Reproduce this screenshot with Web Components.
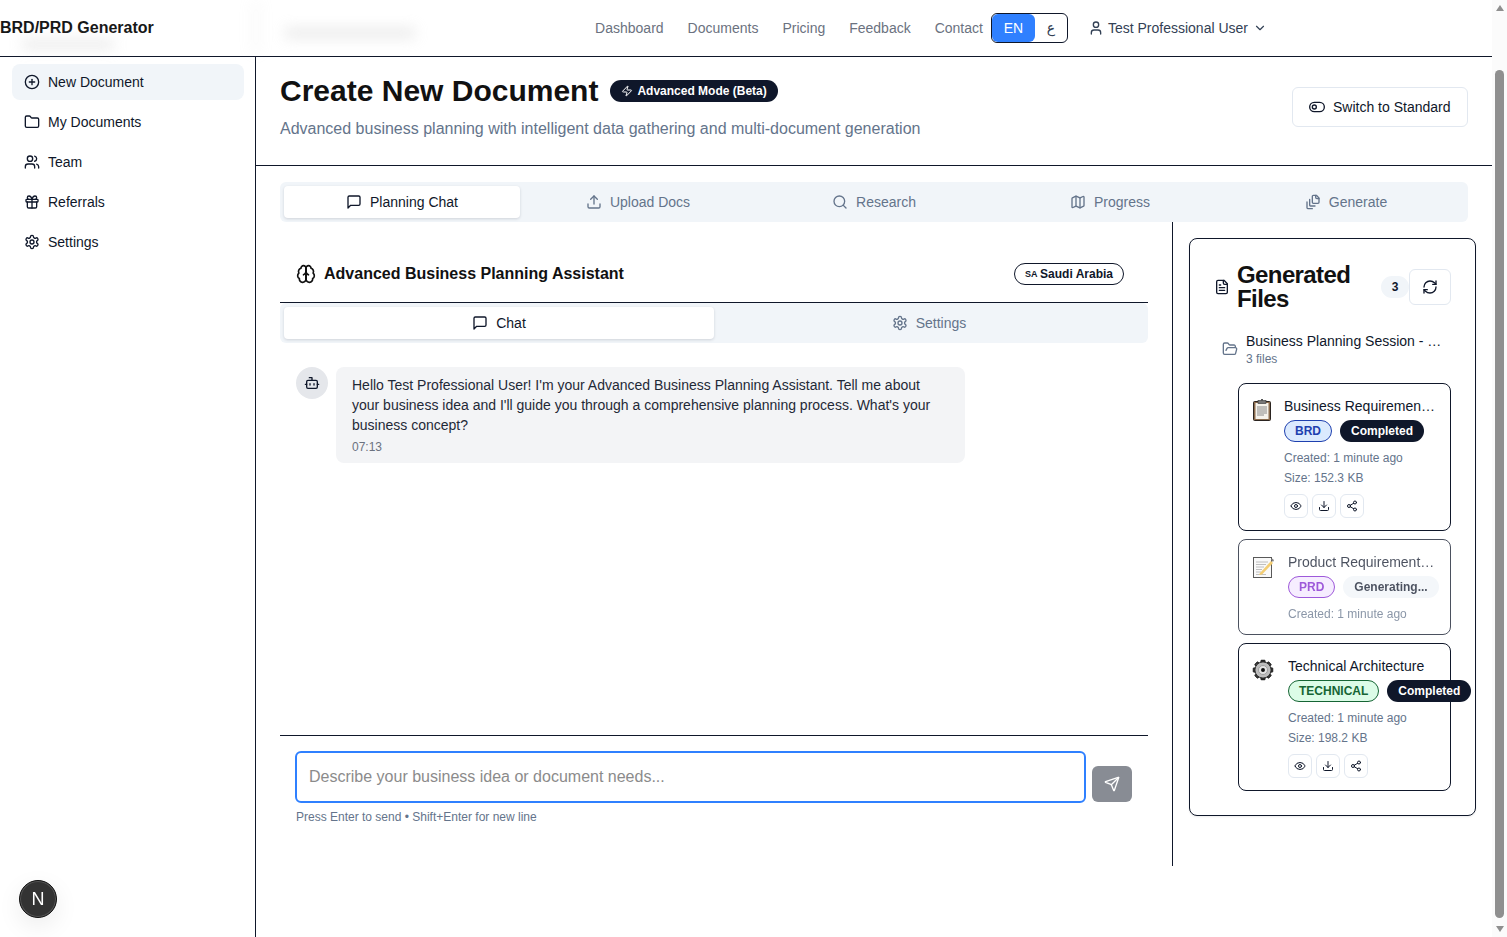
<!DOCTYPE html>
<html lang="en">
<head>
<meta charset="utf-8">
<title>BRD/PRD Generator</title>
<style>
  html, body { margin: 0; height: 937px; overflow: hidden; background: #fff; }
  body { font-family: "Liberation Sans", Arial, sans-serif; color: #0f172a; }
</style>
</head>
<body>
<app-shell>
  <top-bar slot="top"></top-bar>
  <side-nav slot="side"></side-nav>
  <page-head slot="main"></page-head>
  <tab-strip slot="main" class="outer" active="Planning Chat"
    tabs="message:Planning Chat,upload:Upload Docs,search:Research,map:Progress,filestack:Generate"></tab-strip>
  <work-area slot="main">
    <chat-panel slot="left"></chat-panel>
    <files-panel slot="right"></files-panel>
  </work-area>
  <page-scrollbar slot="bar"></page-scrollbar>
</app-shell>
<dev-badge></dev-badge>

<script>
const ICONS = {
  plus: '<circle cx="12" cy="12" r="10"/><path d="M8 12h8"/><path d="M12 8v8"/>',
  folder: '<path d="M20 20a2 2 0 0 0 2-2V8a2 2 0 0 0-2-2h-7.9a2 2 0 0 1-1.69-.9L9.6 3.9A2 2 0 0 0 7.93 3H4a2 2 0 0 0-2 2v13a2 2 0 0 0 2 2Z"/>',
  users: '<path d="M16 21v-2a4 4 0 0 0-4-4H6a4 4 0 0 0-4 4v2"/><circle cx="9" cy="7" r="4"/><path d="M22 21v-2a4 4 0 0 0-3-3.87"/><path d="M16 3.13a4 4 0 0 1 0 7.75"/>',
  gift: '<rect x="3" y="8" width="18" height="4" rx="1"/><path d="M12 8v13"/><path d="M19 12v7a2 2 0 0 1-2 2H7a2 2 0 0 1-2-2v-7"/><path d="M7.5 8a2.5 2.5 0 0 1 0-5A4.8 8 0 0 1 12 8a4.8 8 0 0 1 4.5-5 2.5 2.5 0 0 1 0 5"/>',
  settings: '<path d="M12.22 2h-.44a2 2 0 0 0-2 2v.18a2 2 0 0 1-1 1.73l-.43.25a2 2 0 0 1-2 0l-.15-.08a2 2 0 0 0-2.73.73l-.22.38a2 2 0 0 0 .73 2.73l.15.1a2 2 0 0 1 1 1.72v.51a2 2 0 0 1-1 1.74l-.15.09a2 2 0 0 0-.73 2.73l.22.38a2 2 0 0 0 2.73.73l.15-.08a2 2 0 0 1 2 0l.43.25a2 2 0 0 1 1 1.73V20a2 2 0 0 0 2 2h.44a2 2 0 0 0 2-2v-.18a2 2 0 0 1 1-1.73l.43-.25a2 2 0 0 1 2 0l.15.08a2 2 0 0 0 2.73-.73l.22-.39a2 2 0 0 0-.73-2.73l-.15-.08a2 2 0 0 1-1-1.74v-.5a2 2 0 0 1 1-1.74l.15-.09a2 2 0 0 0 .73-2.73l-.22-.38a2 2 0 0 0-2.73-.73l-.15.08a2 2 0 0 1-2 0l-.43-.25a2 2 0 0 1-1-1.73V4a2 2 0 0 0-2-2z"/><circle cx="12" cy="12" r="3"/>',
  message: '<path d="M21 15a2 2 0 0 1-2 2H7l-4 4V5a2 2 0 0 1 2-2h14a2 2 0 0 1 2 2z"/>',
  upload: '<path d="M21 15v4a2 2 0 0 1-2 2H5a2 2 0 0 1-2-2v-4"/><polyline points="17 8 12 3 7 8"/><line x1="12" y1="3" x2="12" y2="15"/>',
  search: '<circle cx="11" cy="11" r="8"/><path d="m21 21-4.3-4.3"/>',
  map: '<path d="M14.106 5.553a2 2 0 0 0 1.788 0l3.659-1.83A1 1 0 0 1 21 4.619v12.764a1 1 0 0 1-.553.894l-4.553 2.277a2 2 0 0 1-1.788 0l-4.212-2.106a2 2 0 0 0-1.788 0l-3.659 1.83A1 1 0 0 1 3 19.381V6.618a1 1 0 0 1 .553-.894l4.553-2.277a2 2 0 0 1 1.788 0z"/><path d="M15 5.764v15"/><path d="M9 3.236v15"/>',
  filestack: '<path d="M21 7h-3a2 2 0 0 1-2-2V2"/><path d="M21 6v6.500c0 .8-.7 1.500-1.500 1.500h-7c-.8 0-1.500-.7-1.500-1.500v-9c0-.8.7-1.500 1.500-1.500H17Z"/><path d="M7 8v8.800c0 .6.4 1.200 1.200 1.200H15"/><path d="M3 12v8.800c0 .6.4 1.200 1.200 1.200H11"/>',
  brain: '<path d="M12 5a3 3 0 1 0-5.997.125 4 4 0 0 0-2.526 5.77 4 4 0 0 0 .556 6.588A4 4 0 1 0 12 18Z"/><path d="M12 5a3 3 0 1 1 5.997.125 4 4 0 0 1 2.526 5.77 4 4 0 0 1-.556 6.588A4 4 0 1 1 12 18Z"/><path d="M15 13a4.5 4.5 0 0 1-3-4 4.5 4.5 0 0 1-3 4"/><path d="M12 5v13"/>',
  bot: '<path d="M12 8V4H8"/><rect x="4" y="8" width="16" height="12" rx="2"/><path d="M2 14h2"/><path d="M20 14h2"/><path d="M15 13v2"/><path d="M9 13v2"/>',
  eye: '<path d="M2.062 12.348a1 1 0 0 1 0-.696 10.75 10.75 0 0 1 19.876 0 1 1 0 0 1 0 .696 10.75 10.75 0 0 1-19.876 0"/><circle cx="12" cy="12" r="3"/>',
  download: '<path d="M21 15v4a2 2 0 0 1-2 2H5a2 2 0 0 1-2-2v-4"/><polyline points="7 10 12 15 17 10"/><line x1="12" y1="15" x2="12" y2="3"/>',
  share: '<circle cx="18" cy="5" r="3"/><circle cx="6" cy="12" r="3"/><circle cx="18" cy="19" r="3"/><line x1="8.59" y1="13.51" x2="15.42" y2="17.49"/><line x1="15.41" y1="6.51" x2="8.59" y2="10.49"/>',
  send: '<path d="M14.536 21.686a.5.5 0 0 0 .937-.024l6.5-19a.496.496 0 0 0-.635-.635l-19 6.5a.5.5 0 0 0-.024.937l7.93 3.18a2 2 0 0 1 1.112 1.11z"/><path d="m21.854 2.147-10.94 10.939"/>',
  refresh: '<path d="M3 12a9 9 0 0 1 9-9 9.75 9.75 0 0 1 6.74 2.74L21 8"/><path d="M21 3v5h-5"/><path d="M21 12a9 9 0 0 1-9 9 9.75 9.75 0 0 1-6.74-2.74L3 16"/><path d="M8 16H3v5"/>',
  filetext: '<path d="M15 2H6a2 2 0 0 0-2 2v16a2 2 0 0 0 2 2h12a2 2 0 0 0 2-2V7Z"/><path d="M14 2v4a2 2 0 0 0 2 2h4"/><path d="M10 9H8"/><path d="M16 13H8"/><path d="M16 17H8"/>',
  folderopen: '<path d="m6 14 1.5-2.9A2 2 0 0 1 9.24 10H20a2 2 0 0 1 1.94 2.5l-1.54 6a2 2 0 0 1-1.95 1.5H4a2 2 0 0 1-2-2V5a2 2 0 0 1 2-2h3.9a2 2 0 0 1 1.69.9l.81 1.2a2 2 0 0 0 1.67.9H18a2 2 0 0 1 2 2v2"/>',
  zap: '<path d="M4 14a1 1 0 0 1-.78-1.63l9.9-10.2a.5.5 0 0 1 .86.46l-1.92 6.02A1 1 0 0 0 13 10h7a1 1 0 0 1 .78 1.63l-9.9 10.2a.5.5 0 0 1-.86-.46l1.92-6.02A1 1 0 0 0 11 14z"/>',
  user: '<path d="M19 21v-2a4 4 0 0 0-4-4H9a4 4 0 0 0-4 4v2"/><circle cx="12" cy="7" r="4"/>',
  chevron: '<path d="m6 9 6 6 6-6"/>',
  toggle: '<rect x="1" y="5" width="22" height="14" rx="7"/><circle cx="8" cy="12" r="3"/>'
};

function icon(name, size = 16) {
  return `<svg width="${size}" height="${size}" viewBox="0 0 24 24" fill="none" stroke="currentColor" stroke-width="2" stroke-linecap="round" stroke-linejoin="round" style="flex:none;display:block">${ICONS[name]}</svg>`;
}

// the three colour emoji of the file cards, drawn by hand
const EMOJI = {
  clipboard: `<svg width="20" height="24" viewBox="0 0 20 24" style="display:block">
    <rect x="1.500" y="3.500" width="17" height="19" rx="1" fill="#8a6a4c" stroke="#2a2420"/>
    <rect x="3.500" y="5" width="13" height="16" fill="#f6f3ec"/>
    <path d="M5 9h10M5 11h10M5 13h10M5 15h10M5 17h7" stroke="#8a8a8a" stroke-width="1"/>
    <rect x="6" y="2.500" width="8" height="3" fill="#777" stroke="#333" stroke-width=".6"/>
    <rect x="9" y="1" width="2" height="2" fill="#555"/>
  </svg>`,
  memo: `<svg width="24" height="24" viewBox="0 0 24 24" style="display:block">
    <rect x="1.500" y="3.500" width="18" height="20" fill="#f7f7f7" stroke="#222"/>
    <path d="M4 8h12M4 10.500h10M4 13h8M4 15.500h6M4 18h5M4 20.500h10" stroke="#aaa" stroke-width="1"/>
    <path d="M8 19l11-12 2 2-11 11.500-3 .5z" fill="#f0bd45"/>
    <path d="M19 5.500l1-1 2 1.500-1 2z" fill="#555"/>
  </svg>`,
  gear: `<svg width="24" height="24" viewBox="0 0 24 24" style="display:block">
    <g transform="translate(11 12) scale(.9)">
      <g fill="#333" stroke="#000" stroke-width=".6">
        <rect x="-2.500" y="-11" width="5" height="22" rx="1"/>
        <rect x="-2.500" y="-11" width="5" height="22" rx="1" transform="rotate(45)"/>
        <rect x="-2.500" y="-11" width="5" height="22" rx="1" transform="rotate(90)"/>
        <rect x="-2.500" y="-11" width="5" height="22" rx="1" transform="rotate(135)"/>
      </g>
      <circle r="9" fill="#bdbdbd" stroke="#222"/>
      <circle r="5" fill="#e4e4e4" stroke="#999"/>
      <circle r="2.200" fill="#111"/>
    </g>
  </svg>`
};

class AppShell extends HTMLElement {
  constructor() {
    super();
    this.attachShadow({ mode: 'open' }).innerHTML = `
      <style>
        :host { display: grid; grid-template-columns: 1fr 15px; height: 937px; }
        .page { display: grid; grid-template-columns: 256px 1fr; grid-template-rows: 57px 1fr; min-width: 0; }
        .top { grid-column: 1 / 3; }
        .main { min-width: 0; display: flex; flex-direction: column; }
      </style>
      <div class="page">
        <div class="top"><slot name="top"></slot></div>
        <slot name="side"></slot>
        <div class="main"><slot name="main"></slot></div>
      </div>
      <slot name="bar"></slot>`;
  }
}

class TopBar extends HTMLElement {
  constructor() {
    super();
    const links = ['Dashboard', 'Documents', 'Pricing', 'Feedback', 'Contact'];
    this.attachShadow({ mode: 'open' }).innerHTML = `
      <style>
        :host { display: flex; align-items: center; height: 56px; border-bottom: 1px solid #0f172a; position: relative; background: #fff; padding-right: 225px; }
        .logo { font-size: 16px; font-weight: 700; color: #171717; margin-top: -1px; }
        nav { margin-left: auto; display: flex; align-items: center; gap: 24px; }
        nav a { font-size: 14px; color: #6b7280; }
        .lang { display: flex; width: 75px; height: 28px; margin-left: 8px; border: 1px solid #0f172a; border-radius: 6px; font-size: 14px; }
        .lang span { display: flex; align-items: center; justify-content: center; }
        .en { width: 43px; background: #2f80ff; color: #fff; border-radius: 6px; }
        .ar { flex: 1; color: #334155; font-family: "DejaVu Sans", sans-serif; }
        .user { display: flex; align-items: center; gap: 4px; margin-left: 20px; font-size: 14px; color: #334155; }
        .user b { font-weight: 400; margin-right: 1px; }
        .smudge { position: absolute; background: #c9c9c9; filter: blur(7px); opacity: .4; }
        .a { left: 22px; top: 40px; width: 92px; height: 9px; }
        .b { left: 285px; top: 28px; width: 130px; height: 10px; }
        .c { left: 250px; top: 0; width: 12px; height: 54px; opacity: .07; }
      </style>
      <div class="logo">BRD/PRD Generator</div>
      <nav>
        ${links.map(l => `<a>${l}</a>`).join('')}
      </nav>
      <div class="lang"><span class="en">EN</span><span class="ar" lang="ar">ع</span></div>
      <div class="user">${icon('user', 16)}<b>Test Professional User</b>${icon('chevron', 14)}</div>
      <div class="smudge a"></div><div class="smudge b"></div><div class="smudge c"></div>`;
  }
}

class SideNav extends HTMLElement {
  constructor() {
    super();
    const items = [['plus', 'New Document'], ['folder', 'My Documents'], ['users', 'Team'], ['gift', 'Referrals'], ['settings', 'Settings']];
    this.attachShadow({ mode: 'open' }).innerHTML = `
      <style>
        :host { display: flex; flex-direction: column; gap: 4px; padding: 7px 11px 0 12px; border-right: 1px solid #0f172a; background: #fff; }
        div { display: flex; align-items: center; gap: 8px; height: 36px; padding: 0 12px; border-radius: 8px; font-size: 14px; color: #0f172a; }
        .on { background: #f1f5f9; }
      </style>
      ${items.map(([i, t], n) => `<div class="${n ? '' : 'on'}">${icon(i, 16)}<span>${t}</span></div>`).join('')}`;
  }
}

class PageHead extends HTMLElement {
  constructor() {
    super();
    this.attachShadow({ mode: 'open' }).innerHTML = `
      <style>
        :host { display: flex; align-items: center; justify-content: space-between; height: 109px; box-sizing: border-box; padding: 16px 24px 24px; border-bottom: 1px solid #0f172a; flex: none; }
        .row { display: flex; align-items: center; gap: 12px; height: 36px; }
        h1 { margin: 0; font-size: 30px; line-height: 36px; font-weight: 700; color: #111; }
        .beta { display: flex; align-items: center; gap: 4px; height: 22px; box-sizing: border-box; padding: 0 11px; border-radius: 11px; background: #0f172a; color: #fff; font-size: 12px; font-weight: 700; }
        p { margin: 8px 0 0; font-size: 16px; line-height: 24px; color: #64748b; }
        button { all: unset; display: flex; align-items: center; gap: 8px; height: 40px; box-sizing: border-box; width: 176px; padding: 0 16px; border: 1px solid #e2e8f0; border-radius: 6px; font-size: 14px; color: #0f172a; background: #fff; }
      </style>
      <div>
        <div class="row"><h1>Create New Document</h1><span class="beta">${icon('zap', 12)}Advanced Mode (Beta)</span></div>
        <p>Advanced business planning with intelligent data gathering and multi-document generation</p>
      </div>
      <button>${icon('toggle', 16)}<span>Switch to Standard</span></button>`;
  }
}

class TabStrip extends HTMLElement {
  connectedCallback() {
    const tabs = this.getAttribute('tabs').split(',').map(t => t.split(':'));
    const active = this.getAttribute('active');
    this.attachShadow({ mode: 'open' }).innerHTML = `
      <style>
        :host { display: block; flex: none; }
        :host(.outer) { margin: 16px 24px 0; }
        .bar { display: grid; grid-auto-flow: column; grid-auto-columns: 1fr; height: 40px; box-sizing: border-box; padding: 4px; background: #f1f5f9; border-radius: 6px; }
        .tab { display: flex; align-items: center; justify-content: center; gap: 8px; font-size: 14px; color: #64748b; border-radius: 4px; }
        .on { background: #fff; color: #0f172a; box-shadow: 0 1px 3px rgba(15,23,42,.15); }
      </style>
      <div class="bar">
        ${tabs.map(([i, t]) => `<div class="tab ${t === active ? 'on' : ''}">${icon(i, 16)}<span>${t}</span></div>`).join('')}
      </div>`;
  }
}

class WorkArea extends HTMLElement {
  constructor() {
    super();
    this.attachShadow({ mode: 'open' }).innerHTML = `
      <style>
        :host { display: grid; grid-template-columns: 893px 1fr; height: 644px; padding-left: 24px; flex: none; }
        .left { border-right: 1px solid #0f172a; padding-right: 24px; min-width: 0; display: flex; flex-direction: column; }
        .right { padding: 16px; min-width: 0; }
      </style>
      <div class="left"><slot name="left"></slot></div>
      <div class="right"><slot name="right"></slot></div>`;
  }
}

class ChatPanel extends HTMLElement {
  constructor() {
    super();
    this.attachShadow({ mode: 'open' }).innerHTML = `
      <style>
        :host { display: flex; flex-direction: column; height: 100%; }
        header { display: flex; align-items: center; justify-content: space-between; height: 81px; box-sizing: border-box; padding: 24px 24px 0 16px; border-bottom: 1px solid #0f172a; flex: none; }
        h2 { display: flex; align-items: center; gap: 8px; margin: 0; font-size: 16px; font-weight: 700; color: #111; }
        .region { display: flex; align-items: center; gap: 4px; height: 22px; box-sizing: border-box; padding: 0 10px; border: 1px solid #0f172a; border-radius: 11px; font-size: 12px; font-weight: 700; }
        .region small { width: 11px; font-size: 9px; font-weight: 700; white-space: nowrap; }
        .log { flex: 1; padding: 24px 16px; display: flex; gap: 8px; align-items: flex-start; }
        .avatar { width: 32px; height: 32px; border-radius: 50%; background: #e5e7eb; display: flex; align-items: center; justify-content: center; flex: none; }
        .bubble { width: 629px; box-sizing: border-box; padding: 8px 16px; background: #f3f4f6; border-radius: 8px; font-size: 14px; line-height: 20px; color: #1f2937; }
        time { display: block; margin-top: 4px; font-size: 12px; line-height: 16px; color: #6b7280; }
        footer { flex: none; height: 131px; box-sizing: border-box; border-top: 1px solid #0f172a; padding: 15px 16px 0 15px; }
        .row { display: flex; align-items: flex-end; gap: 6px; }
        .input { flex: 1; height: 52px; box-sizing: border-box; border: 2px solid #2f80ff; border-radius: 6px; padding: 14px 12px; font-size: 16px; line-height: 20px; color: #8b8b8b; }
        .send { width: 40px; height: 36px; margin-bottom: 1px; border-radius: 6px; background: #888c94; color: #fff; display: flex; align-items: center; justify-content: center; }
        .hint { margin: 6px 0 0 1px; font-size: 12px; line-height: 16px; color: #64748b; }
      </style>
      <header>
        <h2>${icon('brain', 20)}<span>Advanced Business Planning Assistant</span></h2>
        <span class="region"><small>SA</small>Saudi Arabia</span>
      </header>
      <tab-strip active="Chat" tabs="message:Chat,settings:Settings"></tab-strip>
      <div class="log">
        <div class="avatar">${icon('bot', 16)}</div>
        <div class="bubble">Hello Test Professional User! I'm your Advanced Business Planning Assistant. Tell me about your business idea and I'll guide you through a comprehensive planning process. What's your business concept?<time>07:13</time></div>
      </div>
      <footer>
        <div class="row">
          <div class="input" role="textbox">Describe your business idea or document needs...</div>
          <div class="send">${icon('send', 16)}</div>
        </div>
        <div class="hint">Press Enter to send • Shift+Enter for new line</div>
      </footer>`;
  }
}

class FilesPanel extends HTMLElement {
  constructor() {
    super();
    this.attachShadow({ mode: 'open' }).innerHTML = `
      <style>
        :host { display: block; box-sizing: border-box; border: 1px solid #0f172a; border-radius: 8px; padding: 24px; background: #fff; box-shadow: 0 1px 2px rgba(0,0,0,.08); }
        header { display: flex; align-items: center; height: 48px; }
        header > svg { margin-right: 8px; }
        h3 { flex: 1; margin: 0 0 0 -1px; font-size: 24px; line-height: 24px; font-weight: 700; letter-spacing: -.6px; color: #111; }
        .count { width: 28px; height: 22px; border-radius: 11px; background: #f1f5f9; display: flex; align-items: center; justify-content: center; font-size: 12px; font-weight: 700; }
        .refresh { width: 42px; height: 36px; box-sizing: border-box; border: 1px solid #e2e8f0; border-radius: 6px; display: flex; align-items: center; justify-content: center; }
        .session { display: flex; align-items: center; gap: 8px; margin-top: 20px; padding: 0 8px; height: 36px; }
        .session svg { color: #64748b; }
        .session div { min-width: 0; }
        .name { font-size: 14px; line-height: 20px; white-space: nowrap; overflow: hidden; text-overflow: ellipsis; }
        .files { font-size: 12px; line-height: 16px; color: #64748b; }
        .cards { display: flex; flex-direction: column; gap: 8px; margin: 16px 0 0 24px; }
      </style>
      <header>
        ${icon('filetext', 16)}
        <h3>Generated Files</h3>
        <span class="count">3</span>
        <span class="refresh">${icon('refresh', 16)}</span>
      </header>
      <div class="session">
        ${icon('folderopen', 16)}
        <div><div class="name">Business Planning Session - 2024-01-15</div><div class="files">3 files</div></div>
      </div>
      <div class="cards">
        <file-card emoji="clipboard" w="21" kind="brd" label="BRD" status="Completed" name="Business Requirements Document" size="152.3 KB"></file-card>
        <file-card emoji="memo" w="25" kind="prd" label="PRD" status="Generating..." name="Product Requirements Document" pending></file-card>
        <file-card emoji="gear" w="25" kind="tech" label="TECHNICAL" status="Completed" name="Technical Architecture" size="198.2 KB"></file-card>
      </div>`;
  }
}

class FileCard extends HTMLElement {
  connectedCallback() {
    const size = this.getAttribute('size');
    const pending = this.hasAttribute('pending');
    this.attachShadow({ mode: 'open' }).innerHTML = `
      <style>
        :host { display: flex; gap: 12px; border: 1px solid #0f172a; border-radius: 8px; padding: 12px; background: #fff; }
        :host([pending]) { opacity: .75; }
        .emoji { flex: none; width: ${this.getAttribute('w')}px; padding: 2px 0 0 1px; box-sizing: border-box; }
        .body { flex: 1; min-width: 0; }
        .name { font-size: 14px; line-height: 20px; white-space: nowrap; overflow: hidden; text-overflow: ellipsis; color: #0f172a; }
        .tags { display: flex; gap: 8px; margin-top: 4px; }
        .tag { flex: none; height: 22px; box-sizing: border-box; padding: 0 10px; border: 1px solid transparent; border-radius: 11px; display: flex; align-items: center; font-size: 12px; font-weight: 700; white-space: nowrap; }
        .brd { background: #dbeafe; color: #1e40af; border-color: #1e40af; }
        .prd { background: #f3e8ff; color: #7e22ce; border-color: #7e22ce; }
        .tech { background: #dcfce7; color: #166534; border-color: #166534; }
        .done { background: #0f172a; color: #fff; }
        .wait { background: #f1f5f9; color: #0f172a; }
        .meta { font-size: 12px; line-height: 16px; color: #64748b; margin-top: 4px; }
        .meta.first { margin-top: 8px; }
        .acts { display: flex; gap: 4px; margin-top: 8px; }
        .acts span { width: 24px; height: 24px; box-sizing: border-box; border: 1px solid #e2e8f0; border-radius: 6px; display: flex; align-items: center; justify-content: center; }
      </style>
      <div class="emoji">${EMOJI[this.getAttribute('emoji')]}</div>
      <div class="body">
        <div class="name">${this.getAttribute('name')}</div>
        <div class="tags">
          <span class="tag ${this.getAttribute('kind')}">${this.getAttribute('label')}</span>
          <span class="tag ${pending ? 'wait' : 'done'}">${this.getAttribute('status')}</span>
        </div>
        <div class="meta first">Created: 1 minute ago</div>
        ${size ? `<div class="meta">Size: ${size}</div>` : ''}
        ${pending ? '' : `<div class="acts"><span>${icon('eye', 12)}</span><span>${icon('download', 12)}</span><span>${icon('share', 12)}</span></div>`}
      </div>`;
  }
}

class PageScrollbar extends HTMLElement {
  constructor() {
    super();
    this.attachShadow({ mode: 'open' }).innerHTML = `
      <style>
        :host { display: flex; flex-direction: column; align-items: center; height: 937px; background: #fbfbfb; }
        .arrow { width: 0; height: 0; border-left: 4px solid transparent; border-right: 4px solid transparent; flex: none; }
        .up { border-bottom: 6px solid #8f8f8f; margin-top: 5px; }
        .down { border-top: 6px solid #8f8f8f; margin-bottom: 5px; }
        .thumb { width: 9px; height: 848px; margin: 59px 0 auto; border-radius: 5px; background: #8f8f8f; }
      </style>
      <div class="arrow up"></div>
      <div class="thumb"></div>
      <div class="arrow down"></div>`;
  }
}

class DevBadge extends HTMLElement {
  constructor() {
    super();
    this.attachShadow({ mode: 'open' }).innerHTML = `
      <style>
        :host { position: fixed; left: 19px; top: 880px; width: 38px; height: 38px; box-sizing: border-box; border-radius: 50%; background: #333; border: 1px solid #111; box-shadow: 0 0 0 1px #555 inset, 0 8px 24px rgba(0,0,0,.08); color: #fff; display: flex; align-items: center; justify-content: center; font-size: 18px; font-family: "Liberation Sans", sans-serif; }
      </style>N`;
  }
}

customElements.define('app-shell', AppShell);
customElements.define('top-bar', TopBar);
customElements.define('side-nav', SideNav);
customElements.define('page-head', PageHead);
customElements.define('tab-strip', TabStrip);
customElements.define('work-area', WorkArea);
customElements.define('chat-panel', ChatPanel);
customElements.define('files-panel', FilesPanel);
customElements.define('file-card', FileCard);
customElements.define('page-scrollbar', PageScrollbar);
customElements.define('dev-badge', DevBadge);
</script>
</body>
</html>
